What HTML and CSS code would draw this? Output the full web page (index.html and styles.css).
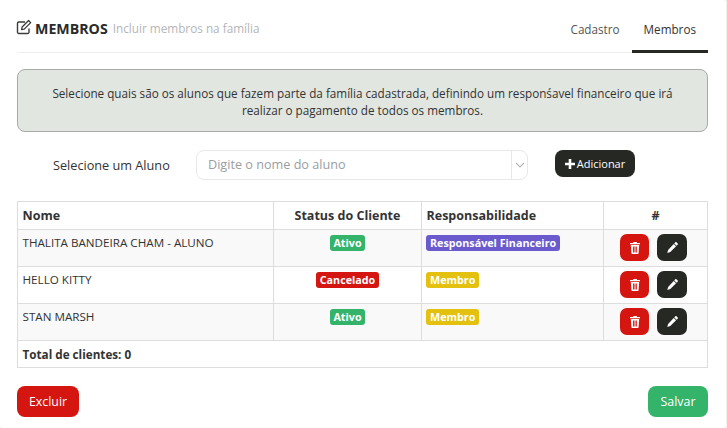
FILE: index.html
```html
<!DOCTYPE html>
<html lang="pt-BR">
<head>
<meta charset="utf-8">
<title>Membros</title>
<link rel="stylesheet" href="styles.css">
</head>
<body>
<main class="card">
  <header class="head">
    <div class="title">
      <svg class="edit-icon" viewBox="0 0 16 16" width="16" height="16" aria-hidden="true">
        <path d="M13 9.5V13.2a1.3 1.3 0 0 1-1.3 1.3H2.8a1.3 1.3 0 0 1-1.3-1.3V4.3A1.3 1.3 0 0 1 2.8 3H9" fill="none" stroke="#3a3d3a" stroke-width="1.4"/>
        <path d="M5.6 10.6l.5-2.6L12.6 1.5l2.1 2.1L8.2 10.1z" fill="none" stroke="#3a3d3a" stroke-width="1.3" stroke-linejoin="round"/>
      </svg>
      <strong class="title-main">MEMBROS</strong>
      <span class="title-sub">Incluir membros na família</span>
    </div>
    <nav class="tabs">
      <a class="tab">Cadastro</a>
      <a class="tab tab-active">Membros</a>
    </nav>
  </header>

  <p class="notice">Selecione quais são os alunos que fazem parte da família cadastrada, definindo um responśavel financeiro que irá realizar o pagamento de todos os membros.</p>

  <div class="picker">
    <label class="picker-label">Selecione um Aluno</label>
    <div class="select">
      <span class="select-text">Digite o nome do aluno</span>
      <span class="select-arrow">
        <svg viewBox="0 0 10 6" width="10" height="6" aria-hidden="true"><path d="M1 1l4 4 4-4" fill="none" stroke="#b4b8b8" stroke-width="1.1"/></svg>
      </span>
    </div>
    <button class="btn btn-add" type="button">
      <svg class="plus" viewBox="0 0 10 10" width="10" height="10" aria-hidden="true"><path d="M3.7 0h2.6v3.7H10v2.6H6.3V10H3.7V6.3H0V3.7h3.7z" fill="#fff"/></svg>Adicionar
    </button>
  </div>

  <table class="grid">
    <colgroup><col class="c1"><col class="c2"><col class="c3"><col class="c4"></colgroup>
    <thead>
      <tr><th class="left">Nome</th><th>Status do Cliente</th><th class="left">Responsabilidade</th><th>#</th></tr>
    </thead>
    <tbody>
      <tr class="odd">
        <td>THALITA BANDEIRA CHAM - ALUNO</td>
        <td class="mid"><span class="badge green">Ativo</span></td>
        <td class="role"><span class="badge purple">Responsável Financeiro</span></td>
        <td class="actions"><div class="action-row">
          <button class="icon-btn red" type="button"><svg viewBox="0 0 10 12" width="10" height="12" aria-hidden="true"><path class="trash" d="M3.4 0h3.2l.5 1H10v1.3H0V1h2.9zM.8 3h8.4l-.6 8a1 1 0 0 1-1 1H2.4a1 1 0 0 1-1-1zM3 4.4v6h.9v-6zm2.5 0v6h-1v-6zm1.5 0v6H6.2v-6z"/></svg></button>
          <button class="icon-btn dark" type="button"><svg viewBox="0 0 12 12" width="11" height="11" aria-hidden="true"><path class="pencil" d="M9 .4a1 1 0 0 1 1.4 0l1.2 1.2a1 1 0 0 1 0 1.4l-1.1 1.1L7.9 1.5zM7.3 2.1l2.6 2.6-6.3 6.3-3.3 1 .9-3.4z"/></svg></button>
        </div></td>
      </tr>
      <tr>
        <td>HELLO KITTY</td>
        <td class="mid"><span class="badge red">Cancelado</span></td>
        <td class="role"><span class="badge yellow">Membro</span></td>
        <td class="actions"><div class="action-row">
          <button class="icon-btn red" type="button"><svg viewBox="0 0 10 12" width="10" height="12" aria-hidden="true"><path class="trash" d="M3.4 0h3.2l.5 1H10v1.3H0V1h2.9zM.8 3h8.4l-.6 8a1 1 0 0 1-1 1H2.4a1 1 0 0 1-1-1zM3 4.4v6h.9v-6zm2.5 0v6h-1v-6zm1.5 0v6H6.2v-6z"/></svg></button>
          <button class="icon-btn dark" type="button"><svg viewBox="0 0 12 12" width="11" height="11" aria-hidden="true"><path class="pencil" d="M9 .4a1 1 0 0 1 1.4 0l1.2 1.2a1 1 0 0 1 0 1.4l-1.1 1.1L7.9 1.5zM7.3 2.1l2.6 2.6-6.3 6.3-3.3 1 .9-3.4z"/></svg></button>
        </div></td>
      </tr>
      <tr class="odd">
        <td>STAN MARSH</td>
        <td class="mid"><span class="badge green">Ativo</span></td>
        <td class="role"><span class="badge yellow">Membro</span></td>
        <td class="actions"><div class="action-row">
          <button class="icon-btn red" type="button"><svg viewBox="0 0 10 12" width="10" height="12" aria-hidden="true"><path class="trash" d="M3.4 0h3.2l.5 1H10v1.3H0V1h2.9zM.8 3h8.4l-.6 8a1 1 0 0 1-1 1H2.4a1 1 0 0 1-1-1zM3 4.4v6h.9v-6zm2.5 0v6h-1v-6zm1.5 0v6H6.2v-6z"/></svg></button>
          <button class="icon-btn dark" type="button"><svg viewBox="0 0 12 12" width="11" height="11" aria-hidden="true"><path class="pencil" d="M9 .4a1 1 0 0 1 1.4 0l1.2 1.2a1 1 0 0 1 0 1.4l-1.1 1.1L7.9 1.5zM7.3 2.1l2.6 2.6-6.3 6.3-3.3 1 .9-3.4z"/></svg></button>
        </div></td>
      </tr>
    </tbody>
    <tfoot>
      <tr><td colspan="4" class="total">Total de clientes: 0</td></tr>
    </tfoot>
  </table>

  <footer class="foot">
    <button class="btn btn-delete" type="button">Excluir</button>
    <button class="btn btn-save" type="button">Salvar</button>
  </footer>
</main>
</body>
</html>
```

FILE: styles.css
```css
* { box-sizing: border-box; }

html, body {
  margin: 0;
  height: 100%;
  background: #f1f1f1;
}

body {
  font-family: "Open Sans", "Noto Sans", sans-serif;
  font-size: 12px;
  color: #333;
  overflow: hidden;
}

.card {
  width: 726px;
  height: 428px;
  padding: 0 18px 0 17px;
  background: #fff;
  border-radius: 0 3px 3px 3px;
}

.head {
  display: flex;
  justify-content: space-between;
  height: 53px;
  border-bottom: 1px solid #eeeeee;
}

.title {
  display: flex;
  align-items: center;
  gap: 3px;
  padding-top: 4px;
  height: 52px;
}

.edit-icon { margin-top: -3px; margin-left: -1px; }

.title-main {
  font-size: 14.2px;
  font-weight: 700;
  color: #2a2c2a;
}

.title-sub {
  font-size: 11.75px;
  color: #b4b6b8;
  margin-left: 2px;
}

.tabs { display: flex; }

.tab {
  display: block;
  height: 53px;
  padding: 21px 12px 0;
  font-size: 11.7px;
  line-height: 16px;
  color: #555;
  border-bottom: 3px solid transparent;
}

.tab-active {
  color: #333;
  border-bottom-color: #262923;
}

.notice {
  margin: 16px 0 0;
  height: 63px;
  padding: 15px 30px 0;
  background: #e1e6e0;
  border: 1px solid #a8aaa8;
  border-radius: 8px;
  text-align: center;
  font-size: 11.7px;
  line-height: 17px;
  color: #333;
}

.picker {
  display: flex;
  align-items: flex-start;
  margin-top: 18px;
  height: 51px;
}

.picker-label {
  width: 179px;
  padding-left: 36px;
  padding-top: 7px;
  font-size: 12.7px;
  line-height: 17px;
}

.select {
  display: flex;
  width: 332px;
  height: 30px;
  border: 1px solid #e8e8e8;
  border-radius: 8px;
  background: #fff;
}

.select-text {
  flex: 1;
  padding-left: 11px;
  font-size: 12.65px;
  line-height: 27px;
  color: #9a9ea2;
}

.select-arrow {
  display: flex;
  align-items: center;
  justify-content: center;
  width: 16px;
  border-left: 1px solid #e8e8e8;
}

.btn {
  border: 0;
  font-family: inherit;
  color: #fff;
  cursor: pointer;
}

.btn-add {
  display: flex;
  align-items: center;
  justify-content: center;
  width: 80px;
  height: 27px;
  margin-left: 27px;
  padding: 0;
  background: #262923;
  border-radius: 8px;
  font-size: 11px;
}

.plus { margin-right: 2px; }

.grid {
  width: 690px;
  table-layout: fixed;
  border-collapse: collapse;
  background: #fff;
}

.c1 { width: 256px; }
.c2 { width: 148px; }
.c3 { width: 182px; }
.c4 { width: 104px; }

.grid th, .grid td {
  border: 1px solid #dddddd;
  padding: 0 4.5px;
}

.grid th {
  height: 28px;
  font-size: 12.5px;
  font-weight: 700;
  text-align: center;
  color: #333;
}

.grid th.left { text-align: left; }

.grid tbody td {
  height: 37px;
  vertical-align: top;
  padding-top: 4px;
  font-size: 11.65px;
  line-height: 17px;
}

.grid tbody td.mid { text-align: center; }
.grid tbody td.role { padding-left: 4px; }

.odd td { background: #f9f9f9; }

.badge {
  display: inline-block;
  padding: 0 4px;
  height: 16px;
  margin-top: 1px;
  border-radius: 3px;
  font-size: 10.75px;
  font-weight: 700;
  line-height: 16px;
  color: #fff;
  vertical-align: top;
}

.green { background: #34b36b; padding: 0 3.5px; }
.purple { background: #6a5acd; }
.yellow { background: #e4c10f; }
.badge.red { background: #d51510; }

.grid tbody td.actions { padding: 4px 0 0; }

.action-row {
  display: flex;
  justify-content: center;
  gap: 8px;
  padding-right: 4px;
}

.icon-btn {
  display: flex;
  align-items: center;
  justify-content: center;
  width: 30px;
  height: 27px;
  padding: 0;
  border: 0;
  border-radius: 7px;
}

.icon-btn.red { width: 29px; background: #d51510; }
.icon-btn.dark { background: #262923; }
.trash, .pencil { fill: #fff; fill-rule: evenodd; }

.grid .total {
  height: 27px;
  font-size: 11.7px;
  font-weight: 700;
}

.foot {
  display: flex;
  justify-content: space-between;
  margin-top: 18px;
}

.btn-delete, .btn-save {
  width: 62px;
  height: 31px;
  padding: 0;
  border-radius: 8px;
  font-size: 12.4px;
}

.btn-delete { background: #d51510; }
.btn-save { width: 60px; background: #34b36b; }
```
